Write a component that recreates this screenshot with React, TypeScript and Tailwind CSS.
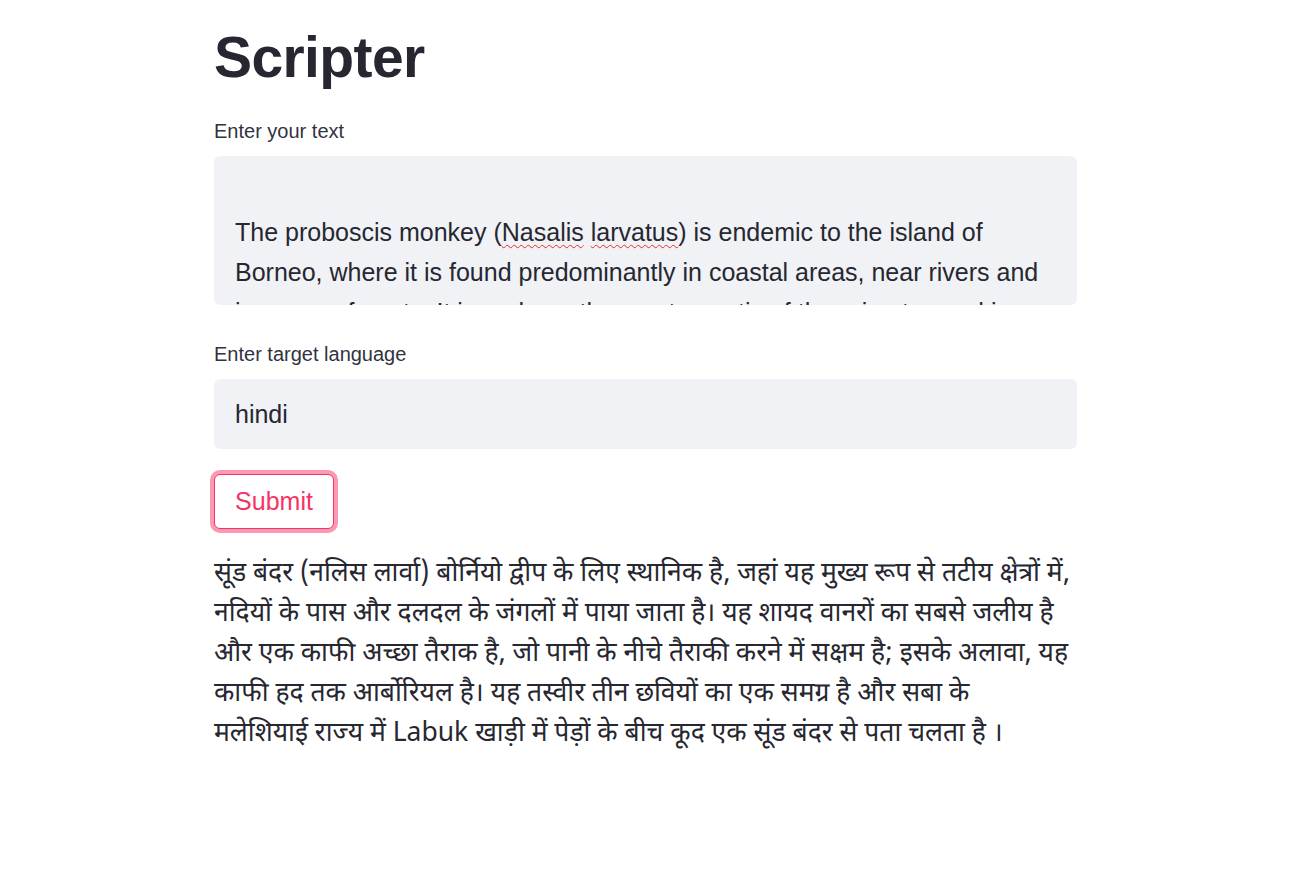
import React from 'react';

const hindiLines = [
    'सूंड बंदर (नलिस लार्वा) बोर्नियो द्वीप के लिए स्थानिक है, जहां यह मुख्य रूप से तटीय क्षेत्रों में,',
    'नदियों के पास और दलदल के जंगलों में पाया जाता है। यह शायद वानरों का सबसे जलीय है',
    'और एक काफी अच्छा तैराक है, जो पानी के नीचे तैराकी करने में सक्षम है; इसके अलावा, यह',
    'काफी हद तक आर्बोरियल है। यह तस्वीर तीन छवियों का एक समग्र है और सबा के',
    'मलेशियाई राज्य में Labuk खाड़ी में पेड़ों के बीच कूद एक सूंड बंदर से पता चलता है ।',
];

const App = () => {
    return (
        <div className="min-h-screen bg-white text-[#262730]" style={{ fontFamily: '"Liberation Sans", Arial, sans-serif' }}>
            <div className="w-[863px] ml-[214px] pt-[23px]">
                <h1 className="text-[57px] leading-[1.2] font-bold tracking-[-0.6px] text-[#262730]">Scripter</h1>

                <div className="mt-[26px]">
                    <label className="block text-[20px] leading-[28px] text-[#31333f]">Enter your text</label>
                    <div className="mt-[11px] h-[149px] overflow-hidden rounded-[6px] bg-[#f0f2f6] px-[21px] pt-[16px] text-[25px] leading-[40px] text-[#262730]">
                        <div>&nbsp;</div>
                        <div>
                            The proboscis monkey (
                            <span className="underline decoration-wavy decoration-[#e0302f] decoration-1 underline-offset-[3px]">Nasalis</span>{' '}
                            <span className="underline decoration-wavy decoration-[#e0302f] decoration-1 underline-offset-[3px]">larvatus</span>
                            ) is endemic to the island of Borneo, where it is found predominantly in coastal areas, near rivers and in swamp forests. It is perhaps the most aquatic of the primates and is a fairly good swimmer.
                        </div>
                    </div>
                </div>

                <div className="mt-[35px]">
                    <label className="block text-[20px] leading-[28px] text-[#31333f]">Enter target language</label>
                    <div className="mt-[11px] flex h-[70px] items-center rounded-[6px] bg-[#f0f2f6] px-[21px] text-[25px] text-[#262730]">
                        hindi
                    </div>
                </div>

                <div className="mt-[25px]">
                    <button className="h-[55px] w-[120px] rounded-[6px] border border-[#f63366] bg-white text-[25px] text-[#f63366] shadow-[0_0_0_4px_rgba(246,51,102,0.5)]">
                        Submit
                    </button>
                </div>

                <div className="mt-[26px] text-[26.5px] leading-[40px] text-[#262730]" style={{ fontFamily: '"Noto Sans Devanagari", "Lohit Devanagari", "FreeSans", "Noto Sans", sans-serif' }}>
                    {hindiLines.map((line, i) => (
                        <div key={i} className="whitespace-nowrap">{line}</div>
                    ))}
                </div>
            </div>
        </div>
    );
};

export default App;
